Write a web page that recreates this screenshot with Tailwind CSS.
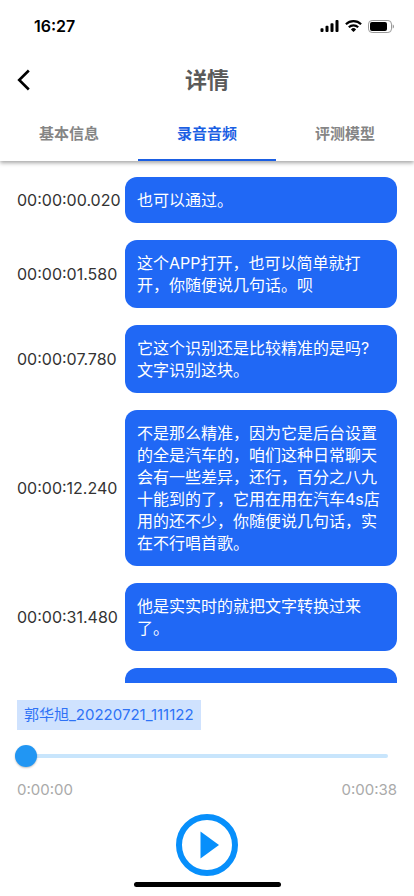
<!DOCTYPE html>
<html lang="zh-CN">
<head>
<meta charset="utf-8">
<meta name="viewport" content="width=device-width, initial-scale=1">
<title>详情</title>
<script src="https://cdn.jsdelivr.net/npm/@tailwindcss/browser@4"></script>
</head>
<body class="bg-white font-['Inter','Noto_Sans_CJK_SC',sans-serif] text-[#333]">
<div class="flex h-screen flex-col overflow-hidden">
  <header class="relative shrink-0 bg-white shadow-[0_2px_4px_rgba(0,0,0,0.35)]">
    <!-- Status bar -->
    <div class="flex h-[52px] items-center justify-between pl-[34px] pr-5 text-black">
      <span class="text-base font-semibold leading-5">16:27</span>
      <div class="flex items-center gap-[6px]">
        <svg class="h-3 w-[19px]" viewBox="0 0 19 12" aria-hidden="true"><rect x="0.5" y="8.2" width="3" height="3.8" rx="0.9"/><rect x="5.5" y="5.8" width="3" height="6.2" rx="0.9"/><rect x="10.5" y="3.2" width="3" height="8.8" rx="0.9"/><rect x="15.5" y="0" width="3" height="12" rx="0.9"/></svg>
        <svg class="h-3 w-[17px]" viewBox="0 0 17 12" aria-hidden="true"><g fill="none" stroke="#000" stroke-width="2.1"><path d="M0.9 4.3a10.8 10.8 0 0 1 15.2 0"/><path d="M3.8 7.3a6.7 6.7 0 0 1 9.4 0"/></g><path d="M8.5 12 5.9 9.4a3.7 3.7 0 0 1 5.2 0z"/></svg>
        <svg class="h-[13px] w-[26px]" viewBox="0 0 26 13" aria-hidden="true"><rect x="0.5" y="0.5" width="23" height="12" rx="3.6" fill="none" stroke="#999"/><rect x="2" y="2" width="17" height="9" rx="2"/><path d="M24.7 4.5v4c.8-.3 1.3-1.1 1.3-2s-.5-1.700-1.300-2z" fill="#999"/></svg>
      </div>
    </div>
    <!-- Title bar -->
    <div class="grid h-14 grid-cols-[48px_1fr_48px] items-center">
      <button type="button" aria-label="返回" class="flex h-12 items-center pl-[17px]">
        <svg class="h-[22px] w-[13px]" viewBox="0 0 13 22" fill="none" stroke="#000" stroke-width="2.6" aria-hidden="true"><path d="M11.800 1.500 2.200 11l9.600 9.500"/></svg>
      </button>
      <h1 class="text-center text-[22px] font-semibold leading-8 text-[#5a5a5a]">详情</h1>
    </div>
    <!-- Tabs -->
    <nav class="grid h-[53px] grid-cols-3 text-[15px] font-semibold leading-5 text-[#858585]" role="tablist">
      <button type="button" role="tab" aria-selected="false" class="border-b-2 border-transparent">基本信息</button>
      <button type="button" role="tab" aria-selected="true" class="border-b-2 border-[#1b5fe3] text-[#1b5fe3]">录音音频</button>
      <button type="button" role="tab" aria-selected="false" class="border-b-2 border-transparent">评测模型</button>
    </nav>
  </header>

  <!-- Transcript -->
  <main class="min-h-0 flex-1 overflow-hidden px-[17px] pt-4">
    <ol class="flex flex-col gap-[17px] text-base leading-[22px]">
      <li class="grid grid-cols-[108px_1fr] items-center"><time>00:00:00.020</time><p class="rounded-xl bg-[#2068f5] p-3 text-white">也可以通过。</p></li>
      <li class="grid grid-cols-[108px_1fr] items-center"><time>00:00:01.580</time><p class="rounded-xl bg-[#2068f5] p-3 text-white">这个APP打开，也可以简单就打开，你随便说几句话。呗</p></li>
      <li class="grid grid-cols-[108px_1fr] items-center"><time>00:00:07.780</time><p class="rounded-xl bg-[#2068f5] p-3 text-white">它这个识别还是比较精准的是吗?文字识别这块。</p></li>
      <li class="grid grid-cols-[108px_1fr] items-center"><time>00:00:12.240</time><p class="rounded-xl bg-[#2068f5] p-3 text-white">不是那么精准，因为它是后台设置的全是汽车的，咱们这种日常聊天会有一些差异，还行，百分之八九十能到的了，它用在用在汽车4s店用的还不少，你随便说几句话，实在不行唱首歌。</p></li>
      <li class="grid grid-cols-[108px_1fr] items-center"><time>00:00:31.480</time><p class="rounded-xl bg-[#2068f5] p-3 text-white">他是实实时的就把文字转换过来了。</p></li>
      <li class="grid grid-cols-[108px_1fr] items-center"><span></span><p class="h-12 rounded-xl bg-[#2068f5] p-3 text-white"></p></li>
    </ol>
  </main>

  <!-- Player -->
  <footer class="shrink-0 bg-white pt-[17px]">
    <div class="px-[17px]"><span class="inline-block bg-[#cfe2fe] px-[7px] py-1 align-top text-[15px] leading-[22px] text-[#2e72f6]">郭华旭_20220721_111122</span></div>
    <div class="mt-[15px] flex h-[22px] items-center pl-[15px] pr-[26px]">
      <input type="range" min="0" max="38" value="0" aria-label="播放进度" class="m-0 h-1 w-full appearance-none rounded-full bg-[#c8e5fc] [&::-webkit-slider-thumb]:size-[22px] [&::-webkit-slider-thumb]:appearance-none [&::-webkit-slider-thumb]:rounded-full [&::-webkit-slider-thumb]:bg-[#2196f3] [&::-webkit-slider-thumb]:shadow-[0_1px_2px_rgba(0,0,0,0.25)]">
    </div>
    <div class="mt-3 flex justify-between px-[17px] text-[15px] leading-[22px] text-[#aaa]"><span>0:00:00</span><span>0:00:38</span></div>
    <div class="mt-[13px] flex justify-center">
      <button type="button" aria-label="播放" class="size-[62px]">
        <svg class="size-[62px]" viewBox="0 0 62 62" aria-hidden="true"><circle cx="31" cy="31" r="28" fill="none" stroke="#078ffb" stroke-width="6"/><path d="M24.500 17.500v27L43 31z" fill="#078ffb"/></svg>
      </button>
    </div>
    <div class="mt-[6px] flex justify-center pb-[9px]"><div class="h-[5px] w-[147px] rounded-full bg-black"></div></div>
  </footer>
</div>
</body>
</html>
